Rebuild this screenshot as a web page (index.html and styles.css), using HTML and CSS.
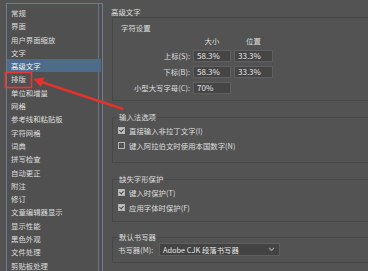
FILE: index.html
```html
<!DOCTYPE html>
<html lang="zh-CN">
<head>
    <meta charset="UTF-8">
    <title>首选项 - 高级文字</title>
    <link rel="stylesheet" href="styles.css">
</head>
<body>
    <div class="page">
        <ul class="nav">
            <li>常规</li>
            <li>界面</li>
            <li>用户界面缩放</li>
            <li>文字</li>
            <li class="active">高级文字</li>
            <li>排版</li>
            <li>单位和增量</li>
            <li>网格</li>
            <li>参考线和粘贴板</li>
            <li>字符网格</li>
            <li>词典</li>
            <li>拼写检查</li>
            <li>自动更正</li>
            <li>附注</li>
            <li>修订</li>
            <li>文章编辑器显示</li>
            <li>显示性能</li>
            <li>黑色外观</li>
            <li>文件处理</li>
            <li>剪贴板处理</li>
        </ul>

        <div class="panel">
            <div class="title">高级文字</div>

            <div class="group chars">
                <div class="sub">字符设置</div>
                <div class="grid">
                    <span></span>
                    <span class="col">大小</span>
                    <span class="col">位置</span>

                    <label>上标(S):</label>
                    <span class="field">58.3%</span>
                    <span class="field">33.3%</span>

                    <label>下标(B):</label>
                    <span class="field">58.3%</span>
                    <span class="field">33.3%</span>

                    <label>小型大写字母(C):</label>
                    <span class="field">70%</span>
                    <span></span>
                </div>
            </div>

            <fieldset class="box ime">
                <legend>输入法选项</legend>
                <div class="check"><span class="tick on"></span>直接输入非拉丁文字(I)</div>
                <div class="check"><span class="tick"></span>键入阿拉伯文时使用本国数字(N)</div>
            </fieldset>

            <fieldset class="box glyph">
                <legend>缺失字形保护</legend>
                <div class="check"><span class="tick on"></span>键入时保护(T)</div>
                <div class="check"><span class="tick on"></span>应用字体时保护(F)</div>
            </fieldset>

            <fieldset class="box composer">
                <legend>默认书写器</legend>
                <div class="row">
                    <label>书写器(M):</label>
                    <div class="select">
                        <span>Adobe CJK 段落书写器</span>
                        <svg width="7" height="5" viewBox="0 0 7 5"><path d="M1 1 L3.5 3.5 L6 1" fill="none" stroke="#9a9a9a" stroke-width="1.2"/></svg>
                    </div>
                </div>
            </fieldset>
        </div>

        <!-- annotation over the list -->
        <svg class="mark" width="368" height="271" viewBox="0 0 368 271">
            <rect x="5.5" y="72.5" width="26" height="15" fill="none" stroke="#e23a35" stroke-width="1.6"/>
            <line x1="123" y1="109" x2="40" y2="81.5" stroke="#e5322d" stroke-width="2.4"/>
            <polygon points="33,79 44.2,77.6 41.2,87" fill="#e5322d"/>
        </svg>
    </div>
</body>
</html>
```

FILE: styles.css
```css
html, body {
    margin: 0;
    padding: 0;
    background-color: #535353;
}

.page {
    position: relative;
    width: 368px;
    height: 271px;
    overflow: hidden;
    display: flex;
    align-items: flex-start;
    padding-left: 6px;
    box-sizing: border-box;
    font-family: "Noto Sans CJK SC", "Noto Sans", sans-serif;
    font-size: 7.4px;
    color: #dedede;
}

.nav {
    list-style: none;
    margin: 3px 0 0 0;
    padding: 2px 0 0 0;
    width: 97px;
    height: 280px;
    flex-shrink: 0;
    box-sizing: border-box;
    background-color: #505050;
    border: 1px solid #6e7c8e;
    box-shadow: inset -3px 0 0 #505050, inset -4px 0 0 #66768a;
}

.nav li {
    height: 13.3px;
    line-height: 13.3px;
    padding-left: 4px;
    white-space: nowrap;
}

.nav li.active {
    background-color: #4e6b8a;
    color: #f2f2f2;
    margin-right: 1px;
}

.panel {
    margin-left: 8px;
    width: 300px;
    flex-shrink: 0;
    display: flex;
    flex-direction: column;
}

.title {
    margin-top: 7px;
    height: 10px;
    line-height: 10px;
}

.group {
    margin-left: 1px;
    border: 1px solid #474747;
    padding: 4px 0 6px 0;
}

.sub {
    height: 12px;
    line-height: 12px;
    padding-left: 8px;
}

.grid {
    margin-top: 2px;
    display: grid;
    grid-template-columns: 77px 38px 39px;
    grid-template-rows: 10px 12px 12px 12px;
    column-gap: 3px;
    row-gap: 4px;
    align-items: center;
}

.grid .col {
    text-align: center;
    line-height: 10px;
}

.grid label {
    text-align: right;
    line-height: 12px;
    white-space: nowrap;
}

.field {
    height: 12px;
    line-height: 10px;
    box-sizing: border-box;
    padding-left: 3px;
    background-color: #454545;
    border: 1px solid #606060;
    font-size: 8px;
    color: #e4e4e4;
}

.box {
    margin: 11px 0 0 1px;
    padding: 2px 0 0 5px;
    border: 1px solid #474747;
    min-width: 0;
}

.box legend {
    padding: 0 1px;
    line-height: 10px;
}

.ime {
    padding-bottom: 11px;
}

.glyph {
    padding-bottom: 8px;
}

.composer {
    margin-top: 10px;
    padding: 1px 0 6px 5px;
}

.check {
    display: flex;
    align-items: center;
    height: 12px;
    margin-bottom: 3px;
    white-space: nowrap;
}

.check:last-child {
    margin-bottom: 0;
}

.tick {
    width: 7px;
    height: 7px;
    margin-right: 4px;
    box-sizing: border-box;
    border: 1px solid #b4b4b4;
    flex-shrink: 0;
}

.tick.on {
    background-color: #c4c4c4;
    position: relative;
}

.tick.on::after {
    content: "";
    position: absolute;
    left: 1px;
    top: 0;
    width: 2px;
    height: 3px;
    border: solid #444;
    border-width: 0 1.2px 1.2px 0;
    transform: rotate(40deg);
}

.row {
    display: flex;
    align-items: center;
    height: 13px;
}

.row label {
    width: 41px;
    white-space: nowrap;
}

.select {
    width: 121px;
    height: 13px;
    box-sizing: border-box;
    display: flex;
    align-items: center;
    justify-content: space-between;
    padding: 0 4px 0 3px;
    background-color: #434343;
    border: 1px solid #5e5e5e;
    color: #e6e6e6;
    white-space: nowrap;
}

.mark {
    position: absolute;
    left: 0;
    top: 0;
    pointer-events: none;
}
```
